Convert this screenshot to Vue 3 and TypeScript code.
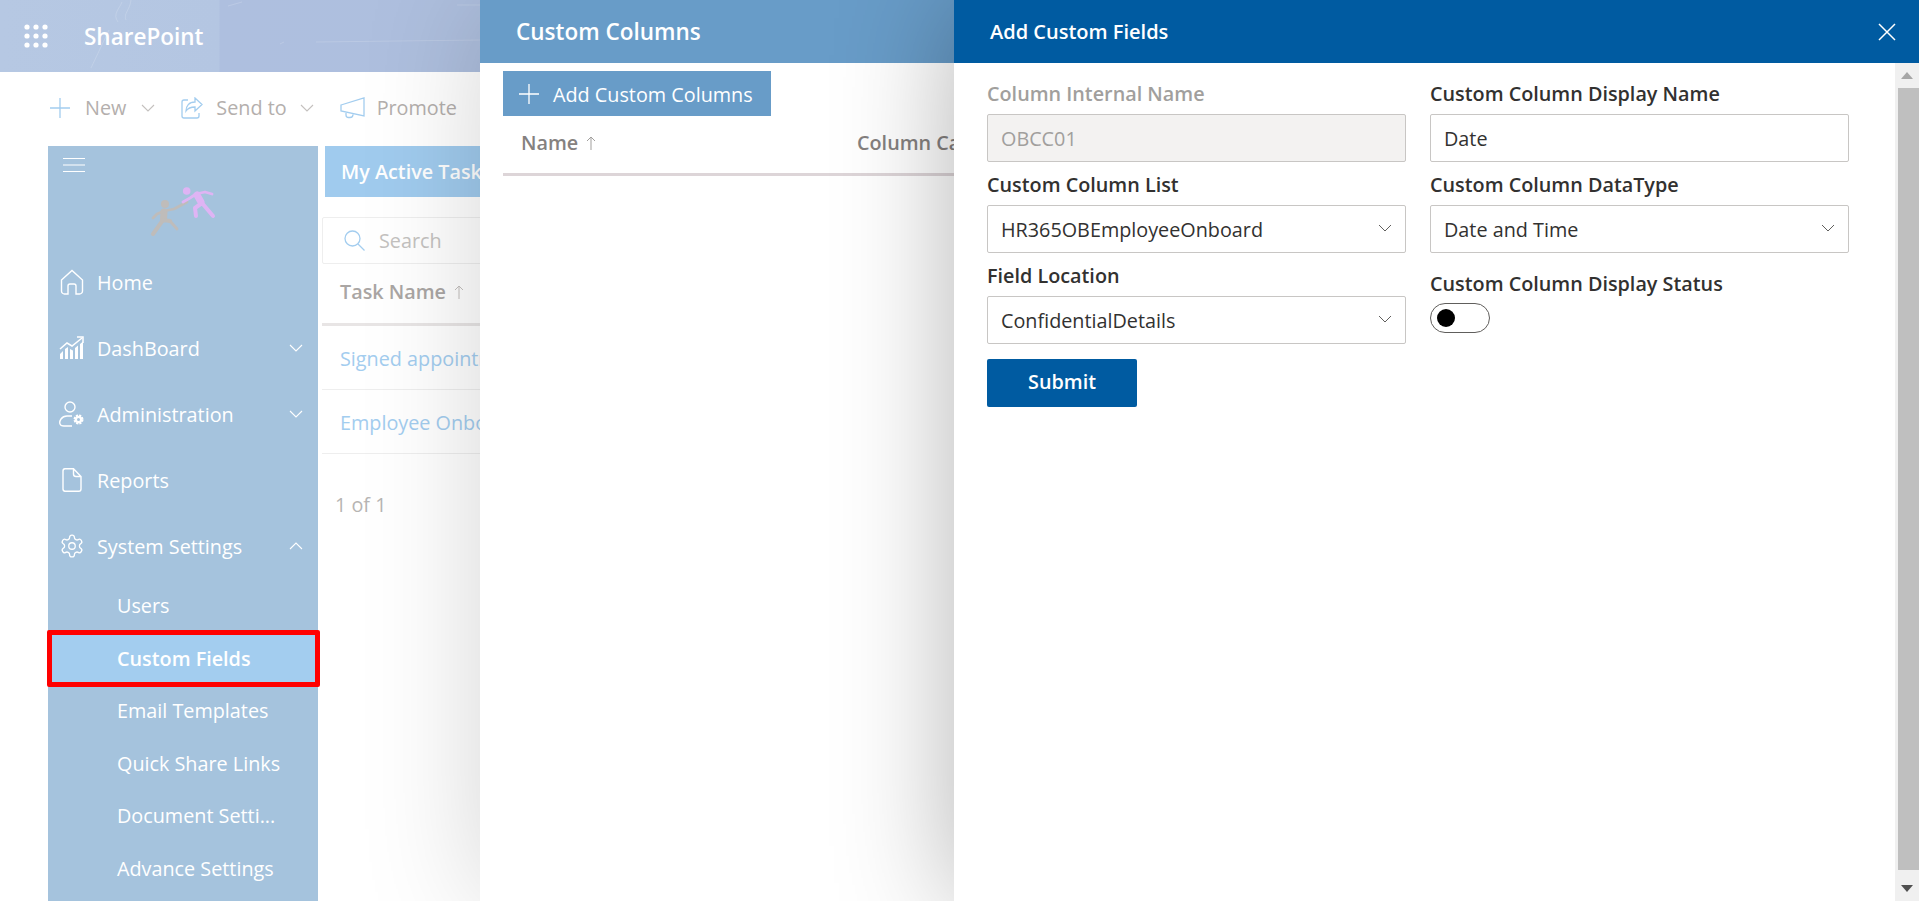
<template>
  <div class="page">
    <header class="suite">
      <svg class="chalk" width="480" height="72" viewBox="0 0 480 72" fill="none" stroke="#fff" stroke-opacity=".16">
        <path d="M91 68l18-38M118 22c-6-8 2-14 4-20M126 20c-3-6 4-10 5-20M457 5h23M316 42l164-2M228 6l14-4M280 44l4-2" />
      </svg>
      <svg class="waffle" width="24" height="24" viewBox="0 0 24 24">
        <g fill="#fff">
          <template v-for="y in [3, 12, 21]" :key="y">
            <circle v-for="x in [3, 12, 21]" :key="x" :cx="x" :cy="y" r="2.6" />
          </template>
        </g>
      </svg>
      <span class="brand">SharePoint</span>
    </header>

    <div class="cmdbar">
      <button class="cmd">
        <svg width="20" height="20" viewBox="0 0 20 20" fill="none" stroke="#a3cdef" stroke-width="1.3"><path d="M10 0v20M0 10h20" /></svg>
        <span>New</span>
        <svg class="cmd-chev" width="14" height="8" viewBox="0 0 14 8" fill="none" stroke="#c4c0be" stroke-width="1.1"><path d="M1 1l6 6 6-6" /></svg>
      </button>
      <button class="cmd">
        <svg width="22" height="22" viewBox="0 0 22 22" fill="none" stroke="#a3cdef" stroke-width="1.3"><path d="M7 3H3a2 2 0 0 0-2 2v14a2 2 0 0 0 2 2h13a2 2 0 0 0 2-2v-3" /><path d="M14 1l7 6.500-7 6.500v-4c-4 0-7 1-9 4 0-5 3-9 9-9z" /></svg>
        <span>Send to</span>
        <svg class="cmd-chev" width="14" height="8" viewBox="0 0 14 8" fill="none" stroke="#c4c0be" stroke-width="1.1"><path d="M1 1l6 6 6-6" /></svg>
      </button>
      <button class="cmd">
        <svg width="25" height="22" viewBox="0 0 25 22" fill="none" stroke="#a3cdef" stroke-width="1.3"><path d="M1 8l23-7v18L1 14zM6 16v2a2.500 2.500 0 0 0 2.500 2.500H10a3 3 0 0 0 3-3" /></svg>
        <span>Promote</span>
      </button>
    </div>

    <div class="workspace">
      <nav class="sidebar">
        <svg class="burger" width="22" height="16" viewBox="0 0 22 16" stroke="#fff" stroke-width="1.2"><path d="M0 1.500h22M0 8h22M0 14.500h22" /></svg>
        <svg class="logo" width="68" height="50" viewBox="0 0 68 50" fill="none" stroke-linecap="round" stroke-linejoin="round">
          <g stroke="#bfbcba">
            <circle cx="15" cy="17" r="4" fill="#bfbcba" stroke="none" />
            <path stroke-width="7" d="M14 25l-.5 7" />
            <path stroke-width="2.800" d="M14 24l10-2 13-7M14 24l-7 3-4 4M20 34l7 8" />
            <path stroke-width="4" d="M13 33L3 47M13 33l7 1" />
          </g>
          <g stroke="#dfb4f4">
            <circle cx="36.700" cy="4" r="3.800" fill="#dfb4f4" stroke="none" />
            <path stroke-width="2.800" d="M46 7l9-2 7 2M46 7l-6 4-7 4" />
            <path stroke-width="7" d="M47 8l4 7" />
            <path stroke-width="4" d="M52 16l11 13M52 16l-7 5 1 8" />
          </g>
        </svg>

        <div v-for="item in navItems" :key="item.label" class="nav-item">
          <span class="nav-icon" v-html="item.icon"></span>
          <span class="nav-label">{{ item.label }}</span>
          <svg v-if="item.chev" class="nav-chev" width="14" height="8" viewBox="0 0 14 8" fill="none" stroke="#fff" stroke-width="1.1">
            <path :d="item.chev === 'down' ? 'M1 1l6 6 6-6' : 'M1 7l6-6 6 6'" />
          </svg>
        </div>

        <div class="subnav">
          <div v-for="sub in subItems" :key="sub" class="sub-item" :class="{ active: sub === 'Custom Fields' }">{{ sub }}</div>
        </div>
      </nav>

      <main class="content">
        <div class="tab">My Active Tasks</div>
        <div class="searchbox">
          <svg width="21" height="21" viewBox="0 0 21 21" fill="none" stroke="#a3cdef" stroke-width="1.3"><circle cx="8.500" cy="8.500" r="7.500" /><path d="M14 14l6.500 6.500" /></svg>
          <span>Search</span>
        </div>
        <div class="task-head">
          Task Name
          <svg class="arrow" width="10" height="14" viewBox="0 0 10 14" fill="none" stroke="#c4c0be" stroke-width="1"><path d="M5 14V1M1 5l4-4 4 4" /></svg>
        </div>
        <div class="task-row">Signed appointment letter</div>
        <div class="task-row">Employee Onboarding</div>
        <div class="pager">1 of 1</div>
      </main>
    </div>

    <section class="panel panel-columns">
      <div class="panel-head"><h2>Custom Columns</h2></div>
      <div class="panel-body">
        <button class="add-btn">
          <svg width="20" height="20" viewBox="0 0 20 20" fill="none" stroke="#fff" stroke-width="1.3"><path d="M10 0v20M0 10h20" /></svg>
          <span>Add Custom Columns</span>
        </button>
        <div class="col-head">
          <span class="col-name">
            Name
            <svg class="arrow" width="10" height="14" viewBox="0 0 10 14" fill="none" stroke="#a19f9d" stroke-width="1"><path d="M5 14V1M1 5l4-4 4 4" /></svg>
          </span>
          <span>Column Ca</span>
        </div>
      </div>
    </section>

    <section class="panel panel-fields">
      <div class="panel-head fields-head">
        <h3>Add Custom Fields</h3>
        <svg width="18" height="18" viewBox="0 0 18 18" fill="none" stroke="#fff" stroke-width="1.5"><path d="M1 1l16 16M17 1L1 17" /></svg>
      </div>
      <div class="fields-wrap">
        <form class="fields" @submit.prevent>
          <div class="col">
            <div class="field">
              <label class="muted">Column Internal Name</label>
              <div class="input disabled">OBCC01</div>
            </div>
            <div class="field">
              <label>Custom Column List</label>
              <div class="input">HR365OBEmployeeOnboard<svg class="sel-chev" width="14" height="8" viewBox="0 0 14 8" fill="none" stroke="#605e5c" stroke-width="1"><path d="M1 1l6 6 6-6" /></svg></div>
            </div>
            <div class="field">
              <label>Field Location</label>
              <div class="input">ConfidentialDetails<svg class="sel-chev" width="14" height="8" viewBox="0 0 14 8" fill="none" stroke="#605e5c" stroke-width="1"><path d="M1 1l6 6 6-6" /></svg></div>
            </div>
            <button class="submit" type="submit">Submit</button>
          </div>
          <div class="col">
            <div class="field">
              <label>Custom Column Display Name</label>
              <div class="input">Date</div>
            </div>
            <div class="field">
              <label>Custom Column DataType</label>
              <div class="input">Date and Time<svg class="sel-chev" width="14" height="8" viewBox="0 0 14 8" fill="none" stroke="#605e5c" stroke-width="1"><path d="M1 1l6 6 6-6" /></svg></div>
            </div>
            <div class="field status">
              <label>Custom Column Display Status</label>
              <div class="toggle"><span class="knob"></span></div>
            </div>
          </div>
        </form>
        <div class="scrollbar">
          <span class="sb-up"></span>
          <span class="sb-thumb"></span>
          <span class="sb-down"></span>
        </div>
      </div>
    </section>
  </div>
</template>

<script setup lang="ts">
interface NavItem {
  label: string;
  icon: string;
  chev?: 'down' | 'up';
}

const stroke = 'fill="none" stroke="#fff" stroke-width="1.4"'

const navItems: NavItem[] = [
  {
    label: 'Home',
    icon: `<svg width="24" height="26" viewBox="0 0 24 26" ${stroke}><path d="M1.500 11L12 1.500 22.500 11v11a3 3 0 0 1-3 3H16v-8a2 2 0 0 0-2-2h-4a2 2 0 0 0-2 2v8H4.500a3 3 0 0 1-3-3z"/></svg>`,
  },
  {
    label: 'DashBoard',
    icon: `<svg width="26" height="24" viewBox="0 0 26 24"><path d="M1 13l7-6 5 3 10-8" fill="none" stroke="#fff" stroke-width="1.500"/><path d="M18 1h6v6" fill="none" stroke="#fff" stroke-width="1.500"/><path fill="#fff" d="M1 23v-5l3-3v8zM6 23V13l3-2v12zM11 23V13l3 1.500V23zM16 23V12l3-2.500V23zM21 23V8l3-2.500V23z"/></svg>`,
    chev: 'down',
  },
  {
    label: 'Administration',
    icon: `<svg width="26" height="26" viewBox="0 0 26 26" ${stroke}><circle cx="11" cy="6" r="5"/><path d="M13 25H5c-5 0-5-4-3-7 1.500-2 4-3 6-3h5"/><circle cx="19.500" cy="18.500" r="3.800" fill="#fff" stroke-width="2.400" stroke-dasharray="2 1"/><circle cx="19.500" cy="18.500" r="1.500" fill="#a5c3dd" stroke="none"/></svg>`,
    chev: 'down',
  },
  {
    label: 'Reports',
    icon: `<svg width="24" height="24" viewBox="0 0 24 24" ${stroke}><path d="M5 .8h8.500L21 8.500V21a2.200 2.200 0 0 1-2.200 2.200H5A2.200 2.200 0 0 1 3 21V3a2.200 2.200 0 0 1 2-2.200zM13.500 1v5a2.500 2.500 0 0 0 2.500 2.500h5"/></svg>`,
  },
  {
    label: 'System Settings',
    icon: `<svg width="28" height="28" viewBox="0 0 24 24" fill="none" stroke="#fff" stroke-width="1.200"><path d="M12.220 2h-.44a2 2 0 0 0-2 2v.18a2 2 0 0 1-1 1.730l-.43.25a2 2 0 0 1-2 0l-.15-.08a2 2 0 0 0-2.730.73l-.22.38a2 2 0 0 0 .73 2.730l.15.1a2 2 0 0 1 1 1.720v.51a2 2 0 0 1-1 1.740l-.15.09a2 2 0 0 0-.73 2.730l.22.38a2 2 0 0 0 2.730.73l.15-.08a2 2 0 0 1 2 0l.43.25a2 2 0 0 1 1 1.730V20a2 2 0 0 0 2 2h.44a2 2 0 0 0 2-2v-.18a2 2 0 0 1 1-1.730l.43-.25a2 2 0 0 1 2 0l.15.08a2 2 0 0 0 2.730-.73l.22-.39a2 2 0 0 0-.73-2.730l-.15-.08a2 2 0 0 1-1-1.740v-.5a2 2 0 0 1 1-1.740l.15-.09a2 2 0 0 0 .73-2.730l-.22-.38a2 2 0 0 0-2.730-.73l-.15.08a2 2 0 0 1-2 0l-.43-.25a2 2 0 0 1-1-1.730V4a2 2 0 0 0-2-2z"/><circle cx="12" cy="12" r="3"/></svg>`,
    chev: 'up',
  },
]

const subItems: string[] = [
  'Users',
  'Custom Fields',
  'Email Templates',
  'Quick Share Links',
  'Document Setti...',
  'Advance Settings',
]
</script>

<style>
html, body {
  margin: 0;
  overflow: hidden;
}
</style>

<style scoped>
* {
  box-sizing: border-box;
}

.page {
  position: relative;
  width: 1919px;
  height: 901px;
  overflow: hidden;
  background: #fff;
  font-family: "Open Sans", "Noto Sans", sans-serif;
  font-size: 19.800px;
}

.suite {
  position: relative;
  height: 72px;
  display: flex;
  align-items: center;
  padding-left: 24px;
  background: linear-gradient(90deg, #b6c8e3 0, #b4c6e2 219px, #aebfdf 220px, #aebfde 480px);
}

.chalk {
  position: absolute;
  left: 0;
  top: 0;
}

.waffle {
  position: relative;
  margin-right: 36px;
}

.brand {
  position: relative;
  color: #fff;
  font-size: 22.500px;
  font-weight: 600;
}

.cmdbar {
  height: 74px;
  display: flex;
  align-items: center;
  padding: 0 0 3px 50px;
}

.cmd {
  display: flex;
  align-items: center;
  gap: 15px;
  margin-right: 26px;
  padding: 0;
  border: 0;
  background: none;
  font: inherit;
  color: #b4afad;
}

.cmd:nth-child(2) {
  gap: 13px;
}

.cmd:last-child {
  gap: 12px;
}

.workspace {
  display: flex;
  align-items: flex-start;
  padding-left: 48px;
}

.sidebar {
  position: relative;
  width: 270px;
  height: 755px;
  flex: none;
  background: #a5c3dd;
  color: #fff;
}

.burger {
  display: block;
  margin: 11px 0 0 15px;
}

.logo {
  display: block;
  margin: 14px 0 12px 102px;
}

.nav-item {
  height: 66px;
  display: flex;
  align-items: center;
  padding-left: 11px;
}

.nav-icon {
  width: 26px;
  height: 26px;
  display: flex;
  align-items: center;
  justify-content: center;
}

.nav-label {
  margin-left: 12px;
  padding-top: 1px;
}

.nav-chev {
  margin-left: auto;
  margin-right: 15px;
}

.subnav {
  margin-top: 1px;
}

.sub-item {
  position: relative;
  height: 52.500px;
  line-height: 52.500px;
  padding-left: 69px;
}

.sub-item.active {
  background: #a3cdef;
  font-weight: 600;
}

/* the red frame is a mark drawn over the screenshot */
.sub-item.active::after {
  content: "";
  position: absolute;
  inset: -3px -2px -2px -1px;
  border: 5px solid #f00;
  border-radius: 2px;
}

.content {
  flex: 1;
  min-width: 0;
  padding-left: 4px;
  white-space: nowrap;
  overflow: hidden;
}

.tab {
  width: 300px;
  height: 51px;
  margin-left: 3px;
  padding-left: 16px;
  line-height: 51px;
  background: #a0cbee;
  color: #fff;
  font-weight: 600;
}

.searchbox {
  width: 300px;
  height: 47px;
  margin-top: 20px;
  display: flex;
  align-items: center;
  gap: 14px;
  padding-left: 21px;
  border: 1px solid #eee;
  border-radius: 2px;
  color: #c4c2c0;
}

.task-head {
  height: 62px;
  line-height: 56px;
  padding-left: 18px;
  border-bottom: 3px solid #e8e5e5;
  color: #aaa6a4;
  font-weight: 600;
}

.arrow {
  margin-left: 3px;
}

.task-row {
  height: 64px;
  line-height: 66px;
  padding-left: 18px;
  border-bottom: 1px solid #eee;
  color: #a3cdef;
}

.pager {
  margin-top: 37px;
  padding-left: 13px;
  color: #b7b5b3;
}

.panel {
  position: absolute;
  top: 0;
  bottom: 0;
  background: #fff;
}

.panel-columns {
  left: 480px;
  width: 474px;
  box-shadow: 0 0 110px rgba(0, 0, 0, .17);
}

.panel-fields {
  left: 954px;
  right: 0;
  display: flex;
  flex-direction: column;
  box-shadow: 0 0 110px rgba(0, 0, 0, .3);
}

.panel-head {
  height: 63px;
  display: flex;
  align-items: center;
  padding-left: 36px;
  background: #689cc8;
  color: #fff;
}

.panel-head h2 {
  margin: 0;
  font-size: 22.500px;
  font-weight: 600;
}

.panel-body {
  padding: 8px 0 0 23px;
}

.add-btn {
  width: 268px;
  height: 45px;
  display: flex;
  align-items: center;
  gap: 14px;
  padding: 0 0 0 16px;
  border: 0;
  background: #689cc8;
  color: #fff;
  font: inherit;
}

.add-btn span {
  padding-top: 1px;
}

.col-head {
  height: 60px;
  display: flex;
  align-items: center;
  padding: 0 0 4px 18px;
  border-bottom: 3px solid #ddd5d8;
  color: #85817f;
  font-weight: 600;
  white-space: nowrap;
  overflow: hidden;
}

.col-name {
  width: 336px;
  flex: none;
}

.fields-head {
  background: #005ba1;
  justify-content: space-between;
  padding: 0 23px 0 36px;
}

.fields-head h3 {
  margin: 0;
  font-size: 20px;
  font-weight: 600;
}

.fields-wrap {
  flex: 1;
  display: flex;
  min-height: 0;
}

.fields {
  flex: 1;
  display: flex;
  gap: 24px;
  padding: 11px 46px 0 33px;
}

.col {
  flex: 1;
  min-width: 0;
  display: flex;
  flex-direction: column;
}

.field {
  margin-bottom: 3px;
}

.field label {
  display: block;
  height: 40px;
  line-height: 40px;
  color: #323130;
  font-weight: 600;
  white-space: nowrap;
}

.field label.muted {
  color: #a19f9d;
}

.input {
  position: relative;
  height: 48px;
  line-height: 48px;
  padding-left: 13px;
  border: 1px solid #c8c6c4;
  border-radius: 2px;
  color: #323130;
}

.input.disabled {
  background: #f3f2f1;
  color: #a19f9d;
}

.sel-chev {
  position: absolute;
  right: 13px;
  top: 18px;
}

.submit {
  width: 150px;
  height: 48px;
  margin-top: 12px;
  padding: 0 0 3px;
  border: 0;
  border-radius: 2px;
  background: #005ba1;
  color: #fff;
  font: inherit;
  font-weight: 600;
}

.status {
  margin-top: 8px;
}

.toggle {
  width: 60px;
  height: 30px;
  margin-top: -1px;
  display: flex;
  align-items: center;
  padding-left: 6px;
  border: 1px solid #605e5c;
  border-radius: 15px;
}

.knob {
  width: 18px;
  height: 18px;
  border-radius: 50%;
  background: #000;
}

.scrollbar {
  width: 24px;
  flex: none;
  display: flex;
  flex-direction: column;
  align-items: center;
  background: #f0f0f0;
}

.sb-up,
.sb-down {
  width: 0;
  height: 0;
  border-left: 6px solid transparent;
  border-right: 6px solid transparent;
}

.sb-up {
  margin: 9px 0 9px;
  border-bottom: 7px solid #a6a6a6;
}

.sb-thumb {
  width: 21px;
  height: 782px;
  margin-left: 2px;
  background: #bfbfbf;
}

.sb-down {
  margin-top: 15px;
  border-top: 7px solid #505050;
}
</style>
